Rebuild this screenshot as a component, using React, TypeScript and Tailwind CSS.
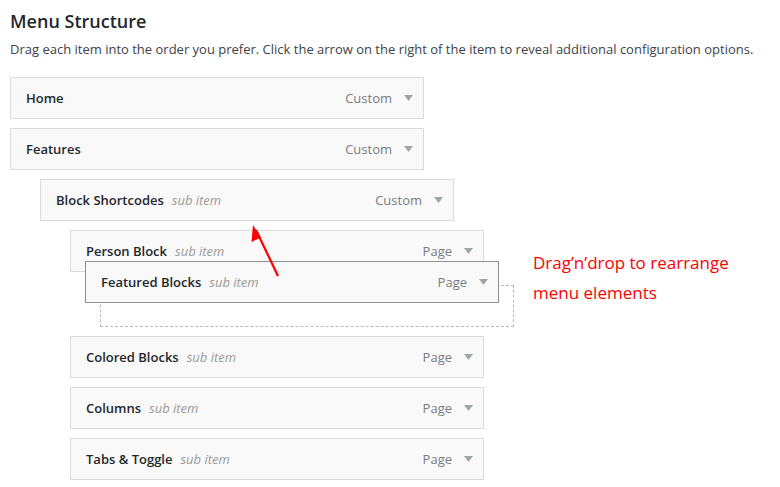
import type { ReactNode } from "react";

type Item = {
  title: string;
  sub?: boolean;
  kind: "Custom" | "Page";
  depth: number;
};

const items: Item[] = [
  { title: "Home", kind: "Custom", depth: 0 },
  { title: "Features", kind: "Custom", depth: 0 },
  { title: "Block Shortcodes", sub: true, kind: "Custom", depth: 1 },
  { title: "Person Block", sub: true, kind: "Page", depth: 2 },
];

const after: Item[] = [
  { title: "Colored Blocks", sub: true, kind: "Page", depth: 2 },
  { title: "Columns", sub: true, kind: "Page", depth: 2 },
  { title: "Tabs & Toggle", sub: true, kind: "Page", depth: 2 },
];

const indent = ["ml-0", "ml-[30px]", "ml-[60px]"];

function Caret() {
  return (
    <svg width="9" height="6" viewBox="0 0 9 6" className="ml-[12px] shrink-0">
      <polygon points="0,0 9,0 4.5,6" fill="#a0a5aa" />
    </svg>
  );
}

function Handle({ item, dragging }: { item: Item; dragging?: boolean }) {
  return (
    <div
      className={`flex h-[42px] w-[414px] items-center justify-between border bg-[#f9f9f9] pl-[15px] pr-[10px] leading-[40px] ${
        dragging ? "border-[#8c8f94]" : "border-[#dcdcde]"
      }`}
    >
      <div className="flex items-center">
        <span className="text-[13px] font-semibold text-[#23282d]">{item.title}</span>
        {item.sub && <span className="ml-[8px] text-[13px] italic text-[#9a9a9a]">sub item</span>}
      </div>
      <div className="flex items-center">
        <span className="text-[13px] text-[#787c82]">{item.kind}</span>
        <Caret />
      </div>
    </div>
  );
}

function Row({ item, children }: { item: Item; children?: ReactNode }) {
  return (
    <li className={`mt-[9px] ${indent[item.depth]}`}>
      <Handle item={item} />
      {children}
    </li>
  );
}

export default function App() {
  return (
    <div className="relative h-[487px] w-[780px] overflow-hidden bg-white px-[10px] pt-[9px] font-['Open_Sans',sans-serif]">
      <h2 className="text-[18px] font-semibold leading-[24px] text-[#23282d]">Menu Structure</h2>
      <p className="mt-[6px] text-[13px] leading-[20px] text-[#3c434a]">
        Drag each item into the order you prefer. Click the arrow on the right of the item to reveal additional
        configuration options.
      </p>

      <ul className="mt-[18px]">
        {items.map((item) => (
          <Row key={item.title} item={item} />
        ))}
        <li className="ml-[90px] mt-[13px] h-[42px] w-[414px] border border-dashed border-[#bbbbbb]" />
        {after.map((item) => (
          <Row key={item.title} item={item} />
        ))}
      </ul>

      {/* item being dragged */}
      <div className="absolute left-[85px] top-[261px] z-10">
        <Handle item={{ title: "Featured Blocks", sub: true, kind: "Page", depth: 2 }} dragging />
      </div>

      {/* annotation arrow */}
      <svg className="absolute left-0 top-0 z-20" width="780" height="487" viewBox="0 0 780 487">
        <line x1="278" y1="276" x2="256" y2="230" stroke="#ff0000" strokeWidth="2.2" />
        <polygon points="253,225 251.5,242 261,237.5" fill="#ff0000" />
      </svg>

      <div className="absolute left-[533px] top-[248px] z-20 text-[17px] leading-[30px] text-[#ff0000]">
        <div>Drag’n’drop to rearrange</div>
        <div>menu elements</div>
      </div>
    </div>
  );
}
